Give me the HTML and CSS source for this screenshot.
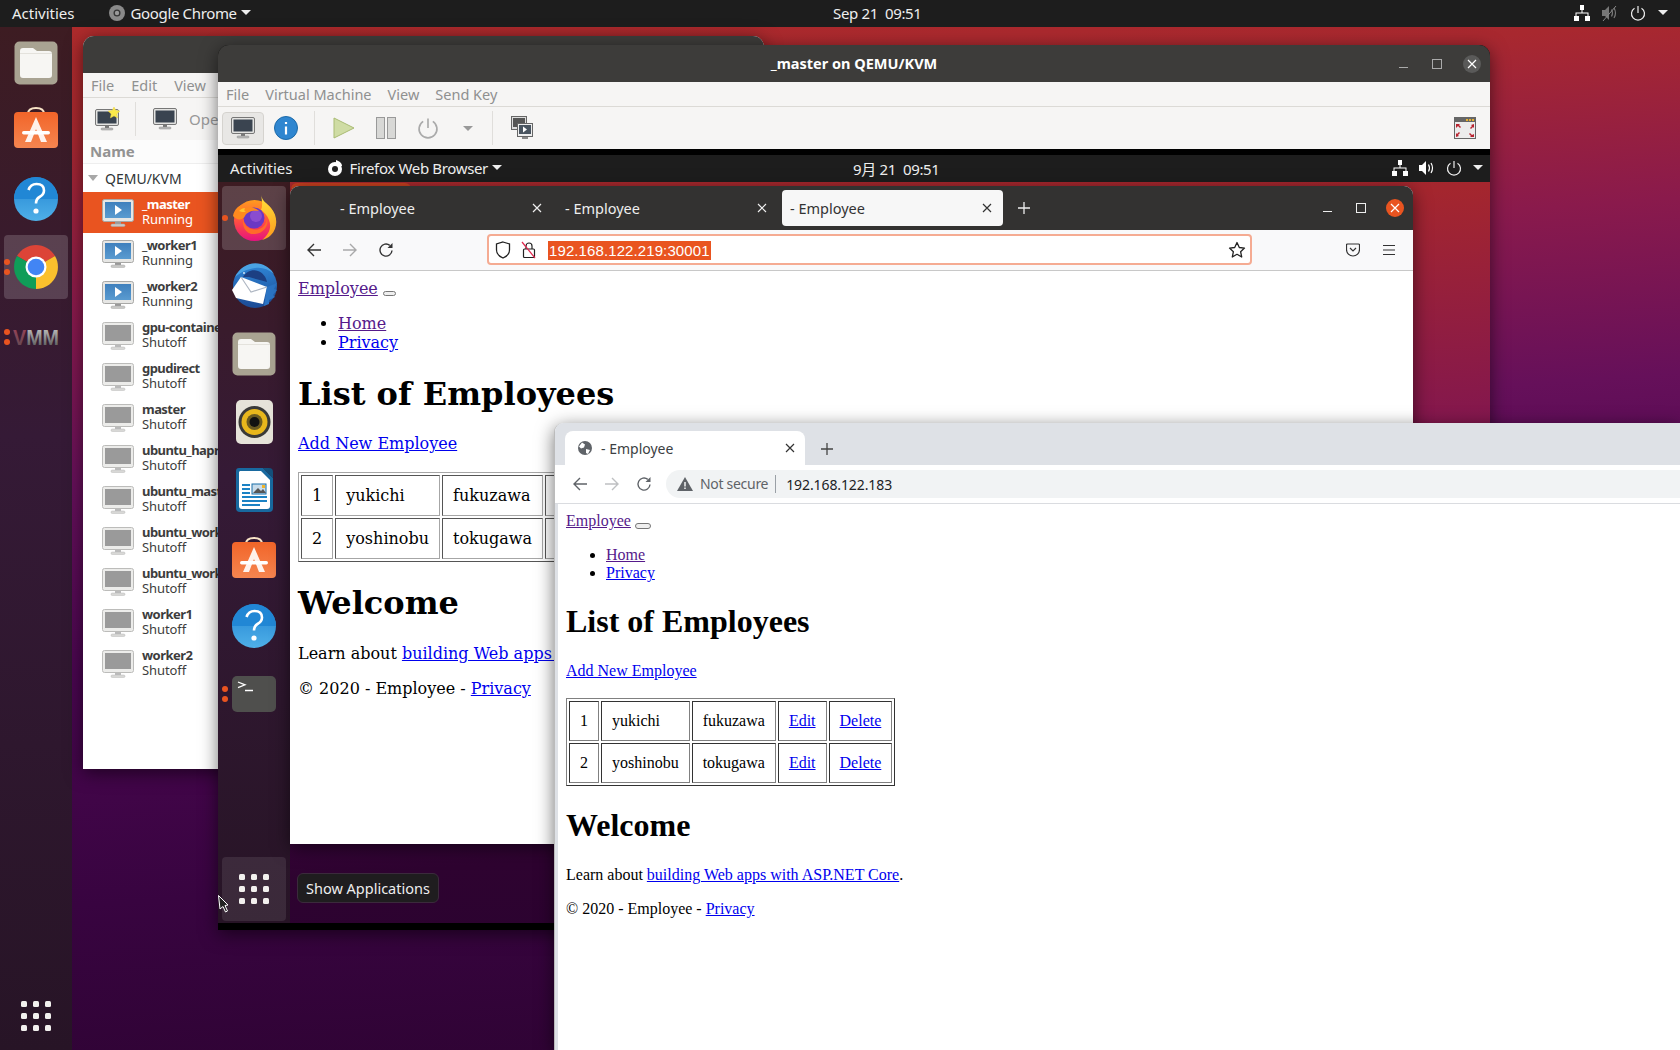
FILE: index.html
```html
<!DOCTYPE html>
<html>
<head>
  <meta charset="utf-8">
  <title>Desktop</title>
  <link rel="stylesheet" href="styles.css">
</head>
<body>
  <svg class="defs" width="0" height="0">
    <defs>
      <linearGradient id="g-blue" x1="0" y1="0" x2="0" y2="1"><stop offset="0" stop-color="#2183d2"/><stop offset="1" stop-color="#4fb0e8"/></linearGradient>
      <linearGradient id="g-screen" x1="0" y1="0" x2="0" y2="1"><stop offset="0" stop-color="#3f80bd"/><stop offset="1" stop-color="#5a9bd0"/></linearGradient>
      <linearGradient id="g-orange" x1="0" y1="0" x2="0" y2="1"><stop offset="0" stop-color="#f26529"/><stop offset="1" stop-color="#f58550"/></linearGradient>
      <linearGradient id="g-fox" x1="0" y1="0" x2="0" y2="1"><stop offset="0" stop-color="#ff9c1e"/><stop offset=".55" stop-color="#ff4a45"/><stop offset="1" stop-color="#e5127f"/></linearGradient>
      <linearGradient id="g-flame" x1="0" y1="0" x2="0" y2="1"><stop offset="0" stop-color="#ffe13a"/><stop offset="1" stop-color="#ff9a1e"/></linearGradient>
      <linearGradient id="g-bird" x1="0" y1="0" x2="0" y2="1"><stop offset="0" stop-color="#2f86d6"/><stop offset="1" stop-color="#1b4a94"/></linearGradient>
      <linearGradient id="g-vmm" x1="0" y1="0" x2="0" y2="1"><stop offset="0" stop-color="#d0d0d0"/><stop offset="1" stop-color="#4a4a4a"/></linearGradient>
      <linearGradient id="g-vmm-red" x1="0" y1="0" x2="0" y2="1"><stop offset="0" stop-color="#a04058"/><stop offset="1" stop-color="#5a4a50"/></linearGradient>
    </defs>

    <symbol id="i-files" viewBox="0 0 44 44">
      <rect x="0.5" y="0.5" width="43" height="43" rx="5" fill="#a9a392"/>
      <path d="M6 10q0-3 3-3h10l4 3h12q3 0 3 3v21q0 3-3 3H9q-3 0-3-3z" fill="#f7f6f3"/>
      <path d="M6 12h32v1H6z" fill="#e4e2dc"/>
    </symbol>

    <symbol id="i-software" viewBox="0 0 44 44">
      <path d="M14 10V8q0-6 8-6t8 6v2" fill="none" stroke="#f8e4c6" stroke-width="2"/>
      <rect y="6" width="44" height="36" rx="4" fill="url(#g-orange)"/>
      <path d="M22 11l11 25h-6l-5-13-5 13h-6z" fill="#fff" opacity=".9"/>
      <rect x="8" y="25" width="28" height="3.500" rx="1.700" fill="#fff"/>
    </symbol>

    <symbol id="i-help" viewBox="0 0 44 44">
      <circle cx="22" cy="22" r="22" fill="url(#g-blue)"/>
      <path d="M0 22a22 22 0 0 1 44 0z" fill="#2187d5"/>
      <path d="M14.500 13q2-6 8-6 7.500 0 7.500 6.500 0 4-4.500 6.500-3.500 2-3.500 6.500" fill="none" stroke="#fff" stroke-width="2.600"/>
      <circle cx="22" cy="34" r="2.600" fill="#fff"/>
    </symbol>

    <symbol id="i-chrome" viewBox="0 0 44 44">
      <path d="M22 22L3 11A22 22 0 0 1 41 11z" fill="#dc4437"/>
      <path d="M22 22L41 11A22 22 0 0 1 22 44z" fill="#fbc02d"/>
      <path d="M22 22L22 44A22 22 0 0 1 3 11z" fill="#0f9d58"/>
      <circle cx="22" cy="22" r="10.500" fill="#fff"/>
      <circle cx="22" cy="22" r="8.300" fill="#4285f4"/>
    </symbol>

    <symbol id="i-firefox" viewBox="0 0 45 46">
      <circle cx="22.500" cy="25.500" r="20.500" fill="url(#g-fox)"/>
      <path d="M29 0c1 6 6 8 10 13 7 8 7 20 0 27-3 3-6 4-9 5 7-5 10-13 7-20-2-5-5-8-8-10 2-5 1-10 0-15z" fill="url(#g-flame)"/>
      <circle cx="22" cy="23" r="10.500" fill="#6b38c4"/>
      <circle cx="24" cy="21" r="6" fill="#8a4cd0"/>
      <path d="M11 24c1 8 9 12 16 10 6-2 9-8 7-14 4 9-1 18-11 19-7 1-13-5-12-15z" fill="#ff6a2a"/>
      <path d="M1 21c1-6 5-10 10-12-1 2-1 3 0 5 5-3 12-2 16 2-7-1-12 1-14 5-2 4-8 5-12 0z" fill="#ff8a1e"/>
      <path d="M7 16c2-2 4-3 6-3-1 2-1 3 1 4-3 0-5 0-7-1z" fill="#ffc42e"/>
    </symbol>

    <symbol id="i-thunderbird" viewBox="0 0 48 48">
      <circle cx="25" cy="24" r="22" fill="url(#g-bird)"/>
      <path d="M5 15C10 5 20-1 31 2c6 2 10 5 13 10-6-5-12-7-19-6-8 1-14 4-20 9z" fill="#4aa3e4"/>
      <path d="M13 15c3-5 9-8 15-6 5 2 8 6 9 11l-18-5z" fill="#1c3f82"/>
      <circle cx="14" cy="11" r="1" fill="#cfe6f6"/>
      <path d="M2 28l9-13 26 10-4 17-27-6z" fill="#fff"/>
      <path d="M11 15l10 15 16-5" fill="none" stroke="#aeb6c2" stroke-width="1.100"/>
      <path d="M37 25l10-4-3 6 3 1-4 5 2 2-6 3 0 4-5 2z" fill="#2b74c4"/>
    </symbol>

    <symbol id="i-rhythmbox" viewBox="0 0 37 44">
      <rect width="37" height="44" rx="5" fill="#e6e3d9"/>
      <circle cx="18.500" cy="22" r="16" fill="#3a3a38"/>
      <circle cx="18.500" cy="22" r="13" fill="#e8b71c"/>
      <circle cx="18.500" cy="22" r="8" fill="#6a5a20"/>
      <circle cx="18.500" cy="22" r="5" fill="#111"/>
    </symbol>

    <symbol id="i-writer" viewBox="0 0 37 44">
      <path d="M3 0h24l10 10v30q0 4-4 4H4q-4 0-4-4V3q0-3 3-3z" fill="#18699f"/>
      <path d="M4 3h21l9 9v26q0 3-3 3H6q-3 0-3-3V4z" fill="#fff"/>
      <path d="M27 0h6q4 0 4 4v6z" fill="#14517c"/>
      <rect x="6" y="16" width="8" height="2" fill="#1b82c4"/>
      <rect x="6" y="20" width="8" height="2" fill="#1b82c4"/>
      <rect x="6" y="24" width="8" height="2" fill="#1b82c4"/>
      <rect x="16" y="16" width="14" height="10" fill="#c9dcea" stroke="#1b6fa8"/>
      <path d="M17 25l5-5 3 3 2-2 3 4z" fill="#555"/>
      <rect x="26" y="17" width="3" height="3" fill="#f0b429"/>
      <rect x="6" y="28" width="25" height="2" fill="#1b82c4"/>
      <rect x="6" y="32" width="25" height="2" fill="#1b82c4"/>
      <rect x="6" y="36" width="18" height="2" fill="#1b82c4"/>
    </symbol>

    <symbol id="i-terminal" viewBox="0 0 44 36">
      <rect width="44" height="36" rx="5" fill="#4f4f4d"/>
      <path d="M6 6l7 2.800-7 2.800" fill="none" stroke="#fff" stroke-width="1.300"/>
      <path d="M13 14.500h8" stroke="#fff" stroke-width="1.500"/>
    </symbol>

    <symbol id="i-monitor-run" viewBox="0 0 32 28">
      <rect x=".5" y=".5" width="31" height="22" rx="2" fill="#e6e6e4" stroke="#a8a8a6"/>
      <rect x="3" y="3" width="26" height="16" fill="url(#g-screen)"/>
      <path d="M13 6l7 5-7 5z" fill="#fff"/>
      <rect x="13" y="23" width="6" height="2" fill="#999"/>
      <rect x="9" y="25" width="14" height="2.500" rx="1.200" fill="#c8c8c6" stroke="#aaa" stroke-width=".5"/>
    </symbol>

    <symbol id="i-monitor-off" viewBox="0 0 32 28">
      <rect x=".5" y=".5" width="31" height="22" rx="2" fill="#ececea" stroke="#bcbcba"/>
      <rect x="3" y="3" width="26" height="16" fill="#9a9a9a"/>
      <rect x="13" y="23" width="6" height="2" fill="#bbb"/>
      <rect x="9" y="25" width="14" height="2.500" rx="1.200" fill="#d8d8d6" stroke="#bbb" stroke-width=".5"/>
    </symbol>

    <symbol id="i-monitor-dark" viewBox="0 0 24 22">
      <rect x=".5" y=".5" width="23" height="16" rx="1.500" fill="#e4e4e2" stroke="#777"/>
      <rect x="2.500" y="2.500" width="19" height="12" fill="#3a4450"/>
      <rect x="10" y="17" width="4" height="2" fill="#777"/>
      <rect x="6" y="19" width="12" height="2" rx="1" fill="#bbb" stroke="#888" stroke-width=".5"/>
    </symbol>

    <symbol id="i-network" viewBox="0 0 16 16">
      <path d="M6 0h4v5H6zM0 11h5v5H0zM11 11h5v5h-5zM7.500 5h1v2.500h6V11h-1V8.500h-11V11h-1V7.500h6z" fill="#fff"/>
    </symbol>
    <symbol id="i-power" viewBox="0 0 16 16">
      <path d="M8 1v7" stroke="currentColor" stroke-width="1.200"/>
      <path d="M4.500 3.200a6.500 6.500 0 1 0 7 0" fill="none" stroke="currentColor" stroke-width="1.200"/>
    </symbol>
    <symbol id="i-volume" viewBox="0 0 16 16">
      <path d="M0 5h3l4-4v14l-4-4H0z" fill="#fff"/>
      <path d="M9.500 4.500q2 3.500 0 7M12 3q3 5 0 10" fill="none" stroke="#fff" stroke-width="1.200"/>
    </symbol>
    <symbol id="i-muted" viewBox="0 0 16 16">
      <path d="M0 5h3l4-4v14l-4-4H0z" fill="#777"/>
      <path d="M9.500 4.500q2 3.500 0 7M12 3q3 5 0 10" fill="none" stroke="#777" stroke-width="1.200"/>
      <path d="M1 16L14 1" stroke="#888" stroke-width="1"/>
    </symbol>
    <symbol id="i-back" viewBox="0 0 16 16">
      <path d="M15 8H2M8 2L2 8l6 6" fill="none" stroke="currentColor" stroke-width="1.400"/>
    </symbol>
    <symbol id="i-forward" viewBox="0 0 16 16">
      <path d="M1 8h13M8 2l6 6-6 6" fill="none" stroke="currentColor" stroke-width="1.400"/>
    </symbol>
    <symbol id="i-reload" viewBox="0 0 16 16">
      <path d="M14 8.500A6 6 0 1 1 11.800 3.400" fill="none" stroke="currentColor" stroke-width="1.400"/>
      <path d="M14.500 1v5h-5z" fill="currentColor"/>
    </symbol>
    <symbol id="i-close" viewBox="0 0 10 10">
      <path d="M1 1l8 8M9 1l-8 8" stroke="currentColor" stroke-width="1.200"/>
    </symbol>
    <symbol id="i-plus" viewBox="0 0 12 12">
      <path d="M6 0v12M0 6h12" stroke="currentColor" stroke-width="1.300"/>
    </symbol>
  </svg>

  <div class="desktop">
    <div class="panel host-panel">
      <span class="panel-label activities">Activities</span>
      <span class="panel-app">
        <svg class="panel-app-icon" width="16" height="16" viewBox="0 0 16 16"><circle cx="8" cy="8" r="8" fill="#8a8a8a"/><circle cx="8" cy="8" r="3.500" fill="#333"/><circle cx="8" cy="8" r="2.200" fill="#999"/></svg>
        <span class="panel-label">Google Chrome</span>
        <span class="caret"></span>
      </span>
      <span class="panel-label panel-clock">Sep 21&nbsp; 09:51</span>
      <span class="panel-tray">
        <svg class="tray-icon" width="16" height="16"><use href="#i-network"/></svg>
        <svg class="tray-icon" width="16" height="16"><use href="#i-muted"/></svg>
        <svg class="tray-icon tray-power" width="16" height="16"><use href="#i-power"/></svg>
        <span class="caret"></span>
      </span>
    </div>

    <div class="dock host-dock">
      <div class="dock-item"><svg width="44" height="44"><use href="#i-files"/></svg></div>
      <div class="dock-item"><svg class="bag-up" width="44" height="44"><use href="#i-software"/></svg></div>
      <div class="dock-item"><svg width="44" height="44"><use href="#i-help"/></svg></div>
      <div class="dock-item active"><i class="pips two"></i><svg width="44" height="44"><use href="#i-chrome"/></svg></div>
      <div class="dock-item vmm-item">
        <i class="pips two"></i>
        <svg width="48" height="28" viewBox="0 0 48 28"><text x="1" y="22" class="vmm-text" textLength="46" lengthAdjust="spacingAndGlyphs"><tspan class="vmm-first">V</tspan>MM</text></svg>
      </div>
      <div class="dock-apps host-apps"><i></i><i></i><i></i><i></i><i></i><i></i><i></i><i></i><i></i></div>
    </div>

    <!-- virt-manager behind the vm viewer -->
    <div class="window manager-window">
      <div class="titlebar"></div>
      <div class="menubar">
        <span>File</span><span>Edit</span><span>View</span>
      </div>
      <div class="toolbar manager-toolbar">
        <svg class="tb-new" width="26" height="24" viewBox="0 0 26 24">
          <use href="#i-monitor-dark" width="24" height="22" y="2"/>
          <path d="M19 0l1.800 3.600 4 .5-3 2.800.8 4-3.600-2-3.600 2 .8-4-3-2.800 4-.5z" fill="#fbe94a" stroke="#e8d040" stroke-width=".5"/>
        </svg>
        <span class="tb-sep"></span>
        <svg class="tb-connect" width="24" height="22"><use href="#i-monitor-dark"/></svg>
        <span class="tb-open">Open</span>
      </div>
      <div class="list-head">Name</div>
      <div class="list-group"><i class="arrow-down"></i>QEMU/KVM</div>
      <div class="vm-row selected"><svg width="32" height="28"><use href="#i-monitor-run"/></svg><div><b>_master</b><span>Running</span></div></div>
      <div class="vm-row"><svg width="32" height="28"><use href="#i-monitor-run"/></svg><div><b>_worker1</b><span>Running</span></div></div>
      <div class="vm-row"><svg width="32" height="28"><use href="#i-monitor-run"/></svg><div><b>_worker2</b><span>Running</span></div></div>
      <div class="vm-row"><svg width="32" height="28"><use href="#i-monitor-off"/></svg><div><b>gpu-container</b><span>Shutoff</span></div></div>
      <div class="vm-row"><svg width="32" height="28"><use href="#i-monitor-off"/></svg><div><b>gpudirect</b><span>Shutoff</span></div></div>
      <div class="vm-row"><svg width="32" height="28"><use href="#i-monitor-off"/></svg><div><b>master</b><span>Shutoff</span></div></div>
      <div class="vm-row"><svg width="32" height="28"><use href="#i-monitor-off"/></svg><div><b>ubuntu_haproxy</b><span>Shutoff</span></div></div>
      <div class="vm-row"><svg width="32" height="28"><use href="#i-monitor-off"/></svg><div><b>ubuntu_master</b><span>Shutoff</span></div></div>
      <div class="vm-row"><svg width="32" height="28"><use href="#i-monitor-off"/></svg><div><b>ubuntu_worker1</b><span>Shutoff</span></div></div>
      <div class="vm-row"><svg width="32" height="28"><use href="#i-monitor-off"/></svg><div><b>ubuntu_worker2</b><span>Shutoff</span></div></div>
      <div class="vm-row"><svg width="32" height="28"><use href="#i-monitor-off"/></svg><div><b>worker1</b><span>Shutoff</span></div></div>
      <div class="vm-row"><svg width="32" height="28"><use href="#i-monitor-off"/></svg><div><b>worker2</b><span>Shutoff</span></div></div>
    </div>

    <!-- vm viewer with the guest desktop inside -->
    <div class="window viewer-window">
      <div class="titlebar viewer-title">
        <span class="title-text">_master on QEMU/KVM</span>
        <span class="win-controls">
          <i class="win-min"></i><i class="win-max"></i>
          <i class="win-close"><svg width="10" height="10"><use href="#i-close"/></svg></i>
        </span>
      </div>
      <div class="menubar viewer-menu">
        <span>File</span><span>Virtual Machine</span><span>View</span><span>Send Key</span>
      </div>
      <div class="toolbar viewer-toolbar">
        <span class="tb-active"><svg width="24" height="22"><use href="#i-monitor-dark"/></svg></span>
        <svg class="tb-info" width="24" height="24" viewBox="0 0 24 24"><circle cx="12" cy="12" r="11.500" fill="#2f86d0" stroke="#1d6aa8"/><path d="M12 6v2M12 10.500v8" stroke="#fff" stroke-width="2.200"/></svg>
        <span class="tb-sep"></span>
        <svg class="tb-play" width="22" height="22" viewBox="0 0 22 22"><path d="M1 1l20 10L1 21z" fill="#cfdca4" stroke="#a9bb73"/></svg>
        <svg class="tb-pause" width="20" height="22" viewBox="0 0 20 22"><rect x=".5" y=".5" width="8" height="21" fill="#d8d8d6" stroke="#999"/><rect x="11.500" y=".5" width="8" height="21" fill="#d8d8d6" stroke="#999"/></svg>
        <svg class="tb-power" width="22" height="22"><use href="#i-power"/></svg>
        <i class="tb-caret"></i>
        <span class="tb-sep"></span>
        <svg class="tb-console" width="22" height="24" viewBox="0 0 22 24">
          <rect x=".5" y=".5" width="15" height="13" fill="#ddd" stroke="#666"/><rect x="2" y="2" width="12" height="9" fill="#555"/>
          <rect x="6.500" y="7.500" width="15" height="13" fill="#eee" stroke="#666"/><rect x="8" y="9" width="12" height="9" fill="#4a5560"/>
          <path d="M12 10.500l4 3-4 3z" fill="#fff"/><rect x="11" y="21" width="6" height="2" fill="#888"/>
        </svg>
        <svg class="tb-fullscreen" width="22" height="22" viewBox="0 0 22 22">
          <rect x=".5" y=".5" width="21" height="21" fill="#ececec" stroke="#666"/><rect x="1" y="1" width="20" height="4" fill="#666"/>
          <rect x="12" y="2" width="2" height="2" fill="#e8b030"/><rect x="15" y="2" width="2" height="2" fill="#e8b030"/><rect x="18" y="2" width="2" height="2" fill="#e8b030"/>
          <path d="M2 7h4l-1 1 2 2-1 1-2-2-2 2zM20 7v4l-1-1-2 2-1-1 2-2-1-1zM2 20v-4l1 1 2-2 1 1-2 2 1 1zM20 20h-4l1-1-2-2 1-1 2 2 2-1z" fill="#b8232f"/>
        </svg>
      </div>

      <div class="guest">
        <div class="panel guest-panel">
          <span class="panel-label activities">Activities</span>
          <span class="panel-app">
            <svg class="panel-app-icon" width="16" height="16" viewBox="0 0 16 16"><circle cx="8" cy="9" r="7" fill="#fff"/><circle cx="8" cy="9" r="3" fill="#222"/><path d="M9 0c3 1 6 3 6 6l-6 0z" fill="#fff"/></svg>
            <span class="panel-label">Firefox Web Browser</span>
            <span class="caret"></span>
          </span>
          <span class="panel-label panel-clock guest-clock">9月 21&nbsp; 09:51</span>
          <span class="panel-tray">
            <svg class="tray-icon" width="16" height="16"><use href="#i-network"/></svg>
            <svg class="tray-icon" width="16" height="16"><use href="#i-volume"/></svg>
            <svg class="tray-icon tray-power" width="16" height="16"><use href="#i-power"/></svg>
            <span class="caret"></span>
          </span>
        </div>

        <div class="dock guest-dock">
          <div class="dock-item active"><i class="pips"></i><svg width="45" height="46"><use href="#i-firefox"/></svg></div>
          <div class="dock-item"><svg width="48" height="48"><use href="#i-thunderbird"/></svg></div>
          <div class="dock-item"><svg width="44" height="44"><use href="#i-files"/></svg></div>
          <div class="dock-item"><svg width="37" height="44"><use href="#i-rhythmbox"/></svg></div>
          <div class="dock-item"><svg width="37" height="44"><use href="#i-writer"/></svg></div>
          <div class="dock-item"><svg width="44" height="44"><use href="#i-software"/></svg></div>
          <div class="dock-item"><svg width="44" height="44"><use href="#i-help"/></svg></div>
          <div class="dock-item"><i class="pips two"></i><svg width="44" height="36"><use href="#i-terminal"/></svg></div>
          <div class="dock-apps guest-apps"><i></i><i></i><i></i><i></i><i></i><i></i><i></i><i></i><i></i></div>
        </div>

        <div class="peek-window"></div>

        <div class="window firefox-window">
          <div class="ff-tabs">
            <div class="ff-tab first"><span>- Employee</span><svg width="10" height="10"><use href="#i-close"/></svg></div>
            <div class="ff-tab second"><span>- Employee</span><svg width="10" height="10"><use href="#i-close"/></svg></div>
            <div class="ff-tab current"><span>- Employee</span><svg width="10" height="10"><use href="#i-close"/></svg></div>
            <svg class="ff-plus" width="12" height="12"><use href="#i-plus"/></svg>
            <span class="win-controls">
              <i class="win-min light"></i><i class="win-max light"></i>
              <i class="win-close hot"><svg width="10" height="10"><use href="#i-close"/></svg></i>
            </span>
          </div>
          <div class="ff-nav">
            <svg class="nav-icon" width="16" height="16"><use href="#i-back"/></svg>
            <svg class="nav-icon off" width="16" height="16"><use href="#i-forward"/></svg>
            <svg class="nav-icon" width="16" height="16"><use href="#i-reload"/></svg>
            <div class="ff-url">
              <svg width="16" height="18" viewBox="0 0 16 18"><path d="M8 1l6.500 2v6c0 4-3 6.500-6.500 8-3.500-1.500-6.500-4-6.500-8V3z" fill="none" stroke="#222" stroke-width="1.300"/></svg>
              <svg class="ff-lock" width="16" height="18" viewBox="0 0 16 18"><rect x="2.500" y="8" width="11" height="8.500" rx="1" fill="#fff" stroke="#222" stroke-width="1.200"/><path d="M5 8V5a3 3 0 0 1 6 0v3" fill="none" stroke="#222" stroke-width="1.200"/><path d="M1 1l13 16" stroke="#e22850" stroke-width="1.200"/></svg>
              <span class="ff-url-text">192.168.122.219:30001</span>
              <svg class="ff-star" width="18" height="18" viewBox="0 0 18 18"><path d="M9 1.500l2.300 5 5.200.6-3.900 3.600 1.100 5.300L9 13.300 4.300 16l1.100-5.300L1.500 7.100l5.200-.6z" fill="none" stroke="#222" stroke-width="1.300" stroke-linejoin="round"/></svg>
            </div>
            <svg class="ff-pocket" width="14" height="14" viewBox="0 0 14 14"><path d="M1.500 1h11q1 0 1 1v4.500a6.500 6.500 0 0 1-13 0V2q0-1 1-1z" fill="none" stroke="#333" stroke-width="1.200"/><path d="M4 5l3 3 3-3" fill="none" stroke="#333" stroke-width="1.200"/></svg>
            <svg class="ff-menu" width="14" height="12" viewBox="0 0 14 12"><path d="M1 1.500h12M1 6h12M1 10.500h12" stroke="#333" stroke-width="1.200"/></svg>
          </div>
          <div class="page page-ff">
            <a class="visited" href="#">Employee</a> <button class="nav-toggle"></button>
            <ul>
              <li><a class="visited" href="#">Home</a></li>
              <li><a href="#">Privacy</a></li>
            </ul>
            <h1>List of Employees</h1>
            <p><a href="#">Add New Employee</a></p>
            <table>
              <tr><td>1</td><td>yukichi</td><td>fukuzawa</td><td><a href="#">Edit</a></td><td><a href="#">Delete</a></td></tr>
              <tr><td>2</td><td>yoshinobu</td><td>tokugawa</td><td><a href="#">Edit</a></td><td><a href="#">Delete</a></td></tr>
            </table>
            <h1>Welcome</h1>
            <p>Learn about <a href="#">building Web apps with ASP.NET Core</a>.</p>
            <p>© 2020 - Employee - <a href="#">Privacy</a></p>
          </div>
        </div>

        <div class="tooltip">Show Applications</div>
      </div>
    </div>

    <svg class="cursor" width="12" height="18" viewBox="0 0 12 18"><path d="M.5.500L10 10 7 10.500 9.500 16 7.500 17 5 11.500 2 14z" fill="#222" stroke="#fff"/></svg>

    <!-- chrome window in front -->
    <div class="window chrome-window">
      <div class="cr-tabs">
        <div class="cr-tab">
          <svg width="14" height="14" viewBox="0 0 14 14"><circle cx="7" cy="7" r="7" fill="#5f6368"/><path d="M4 1.500l3 2-1 3-3 1-2-2zM8 8l4 1-2 4-2-1z" fill="#fff"/></svg>
          <span>- Employee</span>
          <svg class="cr-tab-close" width="10" height="10"><use href="#i-close"/></svg>
        </div>
        <svg class="cr-plus" width="12" height="12"><use href="#i-plus"/></svg>
      </div>
      <div class="cr-nav">
        <svg class="nav-icon" width="16" height="16"><use href="#i-back"/></svg>
        <svg class="nav-icon off" width="16" height="16"><use href="#i-forward"/></svg>
        <svg class="nav-icon" width="16" height="16"><use href="#i-reload"/></svg>
        <div class="cr-omnibox">
          <svg width="16" height="14" viewBox="0 0 16 14"><path d="M8 0l8 14H0z" fill="#5f6368"/><path d="M8 5v4.500M8 10.500v1.500" stroke="#fff" stroke-width="1.400"/></svg>
          <span class="cr-insecure">Not secure</span>
          <span class="cr-url">192.168.122.183</span>
        </div>
      </div>
      <div class="page page-cr">
        <a class="visited" href="#">Employee</a> <button class="nav-toggle"></button>
        <ul>
          <li><a class="visited" href="#">Home</a></li>
          <li><a href="#">Privacy</a></li>
        </ul>
        <h1>List of Employees</h1>
        <p><a href="#">Add New Employee</a></p>
        <table>
          <tr><td>1</td><td>yukichi</td><td>fukuzawa</td><td><a href="#">Edit</a></td><td><a href="#">Delete</a></td></tr>
          <tr><td>2</td><td>yoshinobu</td><td>tokugawa</td><td><a href="#">Edit</a></td><td><a href="#">Delete</a></td></tr>
        </table>
        <h1>Welcome</h1>
        <p>Learn about <a href="#">building Web apps with ASP.NET Core</a>.</p>
        <p>© 2020 - Employee - <a href="#">Privacy</a></p>
      </div>
    </div>
  </div>
</body>
</html>
```

FILE: styles.css
```css
* {
  box-sizing: border-box;
}

html, body {
  margin: 0;
  padding: 0;
}

body {
  width: 1680px;
  height: 1050px;
  overflow: hidden;
  font-family: "Noto Sans", sans-serif;
  font-size: 15px;
}

.defs {
  position: absolute;
}

.desktop {
  position: relative;
  width: 1680px;
  height: 1050px;
  overflow: hidden;
  background: linear-gradient(176deg, #b02c2b 0, #a8282f 12%, #8a1a4c 27%, #66105a 42%, #4a0650 58%, #380440 78%, #2c0330 100%);
}

/* top bars */
.panel {
  display: flex;
  align-items: center;
  padding-bottom: 2px;
  background: #1d1d1d;
  color: #eee;
}

.host-panel {
  height: 27px;
  width: 100%;
}

.panel-label {
  white-space: nowrap;
  letter-spacing: -0.35px;
}

.activities {
  margin-left: 12px;
  letter-spacing: 0;
}

.panel-app {
  display: flex;
  align-items: center;
  gap: 6px;
  margin-left: 34px;
}

.panel-app .caret {
  margin-left: -2px;
}

.panel-clock {
  position: absolute;
  left: 833px;
}

.guest-clock {
  left: 635px;
  margin-top: 1px;
  font-family: "Noto Sans", "Noto Sans CJK JP", sans-serif;
}

.panel-tray {
  display: flex;
  align-items: center;
  gap: 12px;
  margin-left: auto;
  margin-right: 12px;
}

.guest-panel .panel-tray {
  gap: 11px;
  margin-right: 7px;
}

.tray-power {
  color: #eee;
}

.caret {
  width: 0;
  height: 0;
  border-left: 5px solid transparent;
  border-right: 5px solid transparent;
  border-top: 5px solid #eee;
}

/* docks */
.dock {
  position: absolute;
  width: 72px;
  display: flex;
  flex-direction: column;
  align-items: center;
  background: linear-gradient(180deg, #3d1c22 0, #351a36 40%, #271426 100%);
}

.host-dock {
  left: 0;
  top: 27px;
  height: 1023px;
  padding-top: 2px;
}

.dock-item {
  position: relative;
  flex: none;
  width: 64px;
  height: 68px;
  display: flex;
  align-items: center;
  justify-content: center;
}

.dock-item.active::before {
  content: "";
  position: absolute;
  left: 0;
  top: 2px;
  width: 64px;
  height: 64px;
  border-radius: 4px;
  background: rgba(255, 255, 255, 0.17);
}

.dock-item svg {
  position: relative;
}

.bag-up {
  margin-top: -6px;
}

.vmm-item {
  margin-top: 2px;
}

.pips {
  position: absolute;
  left: 0;
  top: 50%;
  width: 6px;
  height: 6px;
  margin-top: -3px;
  border-radius: 50%;
  background: #e95420;
  z-index: 1;
}

.pips.two {
  margin-top: -8px;
  box-shadow: 0 10px 0 #e95420;
}

.vmm-text {
  font: bold 22px "Liberation Sans", sans-serif;
  fill: url(#g-vmm);
}

.vmm-first {
  fill: url(#g-vmm-red);
}

.dock-apps {
  position: absolute;
  display: grid;
  grid-template-columns: repeat(3, 6px);
  gap: 6px;
  justify-content: center;
  align-content: center;
  width: 64px;
  height: 64px;
  left: 4px;
  border-radius: 4px;
}

.dock-apps i {
  width: 6px;
  height: 6px;
  border-radius: 1.500px;
  background: #f2f0ee;
}

.host-apps {
  top: 957px;
}

.guest-apps {
  top: 675px;
  background: rgba(255, 255, 255, 0.09);
}

/* windows */
.window {
  position: absolute;
  overflow: hidden;
  border-radius: 11px 11px 0 0;
  box-shadow: 0 4px 18px rgba(0, 0, 0, 0.55);
}

.titlebar {
  height: 37px;
  background: #3d3c3a;
}

.menubar {
  display: flex;
  align-items: center;
  height: 25px;
  background: #f6f5f4;
  border-bottom: 1px solid #dcdad6;
  color: #8f9090;
  font-size: 14.500px;
}

.toolbar {
  display: flex;
  align-items: center;
  height: 42px;
  background: #f6f5f4;
}

.tb-sep {
  width: 1px;
  height: 34px;
  background: #e0dedb;
}

/* virt-manager */
.manager-window {
  left: 83px;
  top: 36px;
  width: 681px;
  height: 733px;
  background: #fff;
}

.manager-window .menubar {
  padding-left: 8px;
  gap: 17px;
}

.manager-toolbar {
  padding-left: 12px;
  gap: 14px;
}

.tb-connect {
  margin-left: 3px;
}

.tb-open {
  margin-left: -2px;
  color: #999;
}

.list-head {
  height: 24px;
  padding-left: 7px;
  line-height: 22px;
  font-weight: 700;
  color: #939393;
  background: #fcfcfc;
  border-bottom: 1px solid #eee;
}

.list-group {
  display: flex;
  align-items: center;
  height: 28px;
  padding-left: 5px;
  color: #2e3436;
  font-size: 14px;
  background: #fff;
}

.arrow-down {
  width: 0;
  height: 0;
  margin-right: 7px;
  border-left: 5px solid transparent;
  border-right: 5px solid transparent;
  border-top: 6px solid #a8a8a8;
}

.vm-row {
  display: flex;
  align-items: center;
  gap: 8px;
  height: 41px;
  padding-left: 19px;
  color: #3d3d3d;
  font-size: 13px;
  line-height: 15px;
}

.vm-row div {
  margin-top: -2px;
}

.vm-row b, .vm-row span {
  display: block;
  white-space: nowrap;
}

.vm-row b {
  letter-spacing: -0.55px;
}

.vm-row span {
  letter-spacing: -0.1px;
}

.vm-row.selected {
  background: #e95420;
  color: #fff;
}

/* vm viewer */
.viewer-window {
  left: 218px;
  top: 45px;
  width: 1272px;
  height: 885px;
  background: #000;
}

.viewer-title {
  display: flex;
  align-items: center;
  position: relative;
}

.title-text {
  position: absolute;
  left: 0;
  right: 0;
  top: 8px;
  text-align: center;
  color: #fff;
  font-weight: 700;
  font-size: 14.500px;
}

.win-controls {
  display: flex;
  align-items: center;
  margin-left: auto;
  gap: 0;
}

.win-min, .win-max, .win-close {
  display: flex;
  align-items: center;
  justify-content: center;
  width: 34px;
  height: 18px;
  position: relative;
}

.win-min::after {
  content: "";
  width: 9px;
  height: 1px;
  margin-top: 7px;
  background: #aaa;
}

.win-max::after {
  content: "";
  width: 8px;
  height: 8px;
  border: 1px solid #aaa;
}

.win-min.light::after {
  background: #eee;
}

.win-max.light::after {
  border-color: #eee;
}

.win-close {
  width: 18px;
  margin: 0 9px;
  border-radius: 50%;
  background: #5a5a59;
  color: #fff;
}

.win-close.hot {
  background: #e95420;
}

.viewer-menu {
  padding-left: 8px;
  gap: 16px;
}

.viewer-toolbar {
  height: 42px;
  padding-left: 4px;
}

.tb-active {
  display: flex;
  align-items: center;
  justify-content: center;
  width: 42px;
  height: 33px;
  border: 1px solid #d5d3cf;
  border-radius: 4px;
  background: #e8e7e5;
}

.tb-info {
  margin: 0 16px 0 10px;
}

.tb-play {
  margin-left: 18px;
}

.tb-pause {
  margin-left: 21px;
}

.tb-power {
  margin-left: 21px;
  color: #aaa;
}

.tb-caret {
  width: 0;
  height: 0;
  margin: 0 19px 0 24px;
  border-left: 5px solid transparent;
  border-right: 5px solid transparent;
  border-top: 5px solid #999;
}

.tb-console {
  margin-left: 18px;
}

.tb-fullscreen {
  margin-left: auto;
  margin-right: 14px;
}

/* guest desktop */
.guest {
  position: relative;
  height: 768px;
  margin-top: 6px;
  overflow: hidden;
  background: linear-gradient(176deg, #aa2a2c 0, #a4262e 14%, #7f1552 45%, #4a0650 65%, #2e0330 85%, #2a0230 100%);
}

.guest-panel {
  height: 27px;
}

.guest-panel .panel-app-icon {
  margin-right: 1px;
}

.guest-dock {
  left: 0;
  top: 27px;
  height: 741px;
  padding-top: 2px;
}

.peek-window {
  position: absolute;
  left: 73px;
  top: 28px;
  width: 120px;
  height: 6px;
  border-radius: 6px 6px 0 0;
  background: #c8401f;
}

.firefox-window {
  left: 72px;
  top: 31px;
  width: 1123px;
  height: 658px;
  background: #fff;
  border-radius: 9px 9px 0 0;
}

.tooltip {
  position: absolute;
  left: 79px;
  top: 718px;
  height: 30px;
  padding: 0 8px;
  line-height: 28px;
  color: #eee;
  font-size: 14.500px;
  background: #1f1d1f;
  border: 1px solid #3b2a3c;
  border-radius: 6px;
}

.cursor {
  position: absolute;
  left: 218px;
  top: 895px;
}

/* firefox */
.ff-tabs {
  position: relative;
  display: flex;
  align-items: center;
  height: 44px;
  background: #333231;
  color: #eee;
}

.ff-tab {
  position: absolute;
  top: 4px;
  height: 36px;
  display: flex;
  align-items: center;
  justify-content: space-between;
  font-size: 14.500px;
}

.ff-tab.first {
  left: 0;
  width: 257px;
  padding: 0 5px 0 50px;
}

.ff-tab.second {
  left: 267px;
  width: 225px;
  padding: 0 15px 0 8px;
}

.ff-tab.current {
  left: 492px;
  width: 221px;
  padding: 0 11px 0 8px;
  color: #333;
  background: #f7f7f7;
  border-radius: 4px;
}

.ff-plus {
  position: absolute;
  left: 728px;
  top: 16px;
}

.ff-tabs .win-controls {
  position: absolute;
  right: 0;
  top: 13px;
}

.ff-tabs .win-close {
  margin: 0 9px 0 8px;
}

.ff-nav {
  position: relative;
  display: flex;
  align-items: center;
  gap: 20px;
  height: 41px;
  padding-left: 16px;
  color: #333;
  background: #f9f9fa;
  border-bottom: 1px solid #c8c8c8;
}

.nav-icon.off {
  opacity: 0.4;
}

.ff-url {
  position: absolute;
  left: 197px;
  top: 4px;
  display: flex;
  align-items: center;
  gap: 10px;
  width: 765px;
  height: 31px;
  padding-left: 6px;
  background: #fff;
  border: 2px solid #f5ab92;
  border-radius: 4px;
}

.ff-url-text {
  margin: 1px 0 0 1px;
  padding: 0 1px;
  line-height: 19px;
  color: #fff;
  background: #e95420;
  font-family: "Liberation Sans", sans-serif;
  font-size: 15px;
  letter-spacing: 0.1px;
}

.ff-star {
  margin-left: auto;
  margin-right: 4px;
}

.ff-pocket {
  position: absolute;
  left: 1056px;
  top: 13px;
}

.ff-menu {
  position: absolute;
  left: 1092px;
  top: 14px;
}

/* chrome */
.chrome-window {
  left: 554px;
  top: 423px;
  width: 1126px;
  height: 627px;
  background: #fff;
  border-left: 1px solid #bbb;
  border-radius: 9px 0 0 0;
}

.cr-tabs {
  display: flex;
  align-items: flex-end;
  height: 42px;
  padding-left: 10px;
  background: #dee1e6;
}

.cr-tab {
  display: flex;
  align-items: center;
  gap: 9px;
  width: 240px;
  height: 34px;
  padding: 0 10px 0 13px;
  color: #3c4043;
  font-size: 14px;
  background: #fff;
  border-radius: 8px 8px 0 0;
}

.cr-tab-close {
  margin-left: auto;
  color: #333;
}

.cr-plus {
  margin: 0 0 10px 16px;
  color: #444;
}

.cr-nav {
  display: flex;
  align-items: center;
  gap: 16px;
  height: 39px;
  padding-left: 17px;
  color: #5f6368;
  background: #fff;
  border-bottom: 1px solid #dadce0;
}

.cr-omnibox {
  display: flex;
  align-items: center;
  gap: 7px;
  flex: 1;
  height: 28px;
  margin-left: -2px;
  margin-right: -20px;
  padding-left: 11px;
  border-radius: 14px;
  background: #f1f3f4;
  font-size: 14px;
}

.cr-insecure {
  padding-right: 7px;
  color: #5f6368;
  border-right: 1px solid #9aa0a6;
  line-height: 18px;
  letter-spacing: -0.3px;
}

.cr-url {
  margin-left: 3px;
  color: #202124;
  letter-spacing: -0.1px;
}

/* the pages inside the browsers, left on browser defaults */
.page {
  background: #fff;
  color: #000;
  padding: 8px;
  font-size: 16px;
}

.page-ff {
  font-family: "DejaVu Serif", serif;
  width: 1123px;
}

.page-ff h1 {
  margin-top: 22.500px;
}

.page-ff table {
  margin-top: 19px;
}

.page-cr {
  height: 546px;
  border-left: 3px solid #dee1e6;
  font-family: "Liberation Serif", serif;
}

.page-cr table {
  margin-top: 18px;
}

.page h1 {
  white-space: nowrap;
}

.page p {
  white-space: nowrap;
}

.page a {
  color: #0000ee;
}

.page a.visited {
  color: #551a8b;
}

.nav-toggle {
  display: inline-block;
  width: 13px;
  height: 5px;
  padding: 0;
  vertical-align: -1px;
  background: #efefef;
  border: 1px solid #767676;
  border-radius: 3px;
}

.page-cr .nav-toggle {
  width: 16px;
  height: 6px;
  vertical-align: -2px;
}

.page table {
  border-collapse: separate;
  border-spacing: 2px;
  border: 1px solid;
  border-color: #a6a6a6 #555 #555 #a6a6a6;
}

.page td {
  padding: 10px;
  border: 1px solid;
  border-color: #555 #a6a6a6 #a6a6a6 #555;
}

.page-cr table {
  border-color: #808080 #333 #333 #808080;
}

.page-cr td {
  border-color: #333 #808080 #808080 #333;
}
```
